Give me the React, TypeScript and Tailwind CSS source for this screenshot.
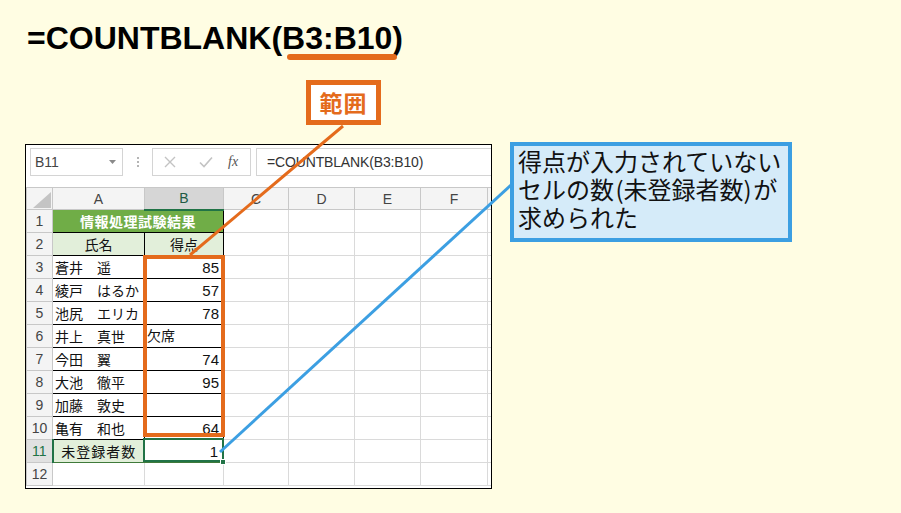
import React from "react";

const names: [string, string][] = [
  ["蒼井　遥", "85"],
  ["綾戸　はるか", "57"],
  ["池尻　エリカ", "78"],
  ["井上　真世", "欠席"],
  ["今田　翼", "74"],
  ["大池　徹平", "95"],
  ["加藤　敦史", ""],
  ["亀有　和也", "64"],
];

const cols = ["C", "D", "E", "F"];

function EmptyCells() {
  return (
    <>
      {cols.map((c) => (
        <td key={c} className="border border-[#dadada]" />
      ))}
      <td className="border-y border-[#dadada]" />
    </>
  );
}

function RowHead({ n, active }: { n: number; active?: boolean }) {
  return (
    <td
      className={
        active
          ? "border border-[#c8c8c8] border-r-2 border-r-[#217346] bg-[#e1e1e1] text-center text-[#217346] font-['Liberation_Sans',sans-serif] text-[14px] leading-none"
          : "border border-[#c8c8c8] bg-[#f4f4f4] text-center text-[#444] font-['Liberation_Sans',sans-serif] text-[14px] leading-none"
      }
    >
      {n}
    </td>
  );
}

export default function App() {
  return (
    <div className="relative w-[901px] h-[513px] overflow-hidden bg-[#fffde3] font-['Noto_Sans_CJK_JP',sans-serif]">
      <div className="flex flex-col">
        {/* heading */}
        <div className="pt-[20px] pl-[27px] font-['Liberation_Sans',sans-serif] font-bold text-[32px] leading-[36px] text-black whitespace-nowrap">
          =COUNTBLANK(
          <span className="relative">
            B3:B10
            <span className="absolute left-[5px] top-[34px] w-[110px] h-[6px] rounded-full bg-[#e46b1c]" />
          </span>
          )
        </div>

        {/* label */}
        <div className="mt-[24px] ml-[306px] w-[75px] h-[45px] border-[5px] border-[#e46b1c] bg-white flex items-center justify-center">
          <span className="text-[#e46b1c] font-bold text-[23px] leading-none tracking-[1px] font-['Noto_Sans_CJK_JP',sans-serif]">
            範囲
          </span>
        </div>

        <div className="flex items-start mt-[19px] ml-[25px]">
          {/* excel frame */}
          <div className="relative w-[467px] h-[345px] border border-black bg-white overflow-hidden flex flex-col">
            {/* toolbar */}
            <div className="h-[42px] flex items-start pt-[3px] pl-[4px] bg-white">
              <div className="w-[93px] h-[28px] border border-[#d4d4d4] bg-white flex items-center justify-between pl-[4px] pr-[6px]">
                <span className="font-['Liberation_Sans',sans-serif] text-[14px] text-[#444] leading-none">B11</span>
                <svg width="7" height="4" viewBox="0 0 7 4">
                  <path d="M0 0 L7 0 L3.5 4 Z" fill="#8a8a8a" />
                </svg>
              </div>
              <div className="w-[29px] h-[28px] flex flex-col items-center justify-center gap-[2px]">
                <span className="w-[2px] h-[2px] bg-[#b5b5b5]" />
                <span className="w-[2px] h-[2px] bg-[#b5b5b5]" />
                <span className="w-[2px] h-[2px] bg-[#b5b5b5]" />
              </div>
              <div className="w-[99px] h-[28px] border border-[#d4d4d4] bg-white flex items-center">
                <svg width="12" height="12" viewBox="0 0 12 12" className="ml-[11px]">
                  <path d="M1 1 L11 11 M11 1 L1 11" stroke="#c3c3c3" strokeWidth="1.4" fill="none" />
                </svg>
                <svg width="14" height="12" viewBox="0 0 14 12" className="ml-[23px]">
                  <path d="M1 6.5 L5 10.5 L13 1.5" stroke="#c3c3c3" strokeWidth="1.6" fill="none" />
                </svg>
                <span className="ml-[15px] font-['Liberation_Serif',serif] italic text-[14px] text-[#555] leading-none">
                  fx
                </span>
              </div>
              <div className="ml-[5px] flex-1 h-[28px] border border-r-0 border-[#d4d4d4] bg-white flex items-center pl-[10px]">
                <span className="font-['Liberation_Sans',sans-serif] text-[14px] text-[#333] leading-none tracking-[-0.15px]">
                  =COUNTBLANK(B3:B10)
                </span>
              </div>
            </div>

            {/* grid */}
            <table className="table-fixed border-collapse w-[465px] text-[14px] text-[#111]">
              <colgroup>
                <col className="w-[26px]" />
                <col className="w-[92px]" />
                <col className="w-[79px]" />
                <col className="w-[65px]" />
                <col className="w-[66px]" />
                <col className="w-[66px]" />
                <col className="w-[67px]" />
                <col className="w-[4px]" />
              </colgroup>
              <tbody>
                <tr className="h-[22px]">
                  <td className="border border-[#c8c8c8] bg-[#f4f4f4] p-0 relative">
                    <svg width="18" height="16" viewBox="0 0 18 16" className="absolute right-[1px] bottom-[1px]">
                      <path d="M18 0 L18 16 L0 16 Z" fill="#c4c4c4" />
                    </svg>
                  </td>
                  <td className="border border-[#c8c8c8] bg-[#f4f4f4] text-center text-[#444] font-['Liberation_Sans',sans-serif] leading-none">A</td>
                  <td className="border border-[#c8c8c8] border-b-2 border-b-[#217346] bg-[#d6d6d6] text-center text-[#215a43] font-['Liberation_Sans',sans-serif] leading-none">B</td>
                  {cols.map((c) => (
                    <td key={c} className="border border-[#c8c8c8] bg-[#f4f4f4] text-center text-[#444] font-['Liberation_Sans',sans-serif] leading-none">
                      {c}
                    </td>
                  ))}
                  <td className="border-y border-[#c8c8c8] bg-[#f4f4f4]" />
                </tr>

                <tr className="h-[23px]">
                  <RowHead n={1} />
                  <td colSpan={2} className="border border-black bg-[#70ad47] text-center text-white font-bold leading-none tracking-[0.5px]">
                    情報処理試験結果
                  </td>
                  <EmptyCells />
                </tr>

                <tr className="h-[23px]">
                  <RowHead n={2} />
                  <td className="border border-black bg-[#e2efda] text-center leading-none">氏名</td>
                  <td className="border border-black bg-[#e2efda] text-center leading-none">得点</td>
                  <EmptyCells />
                </tr>

                {names.map(([name, score], i) => {
                  const isText = score === "欠席";
                  return (
                    <tr key={name} className="h-[23px]">
                      <RowHead n={i + 3} />
                      <td className="border border-black pl-[2px] leading-none whitespace-nowrap">{name}</td>
                      <td
                        className={
                          isText
                            ? "border border-black pl-[2px] leading-none font-['Liberation_Sans','Noto_Sans_CJK_JP',sans-serif]"
                            : "border border-black pr-[4px] text-right leading-none font-['Liberation_Sans',sans-serif] text-[15px]"
                        }
                      >
                        {score}
                      </td>
                      <EmptyCells />
                    </tr>
                  );
                })}

                <tr className="h-[23px]">
                  <RowHead n={11} active />
                  <td className="border border-[#3f7a3a] bg-[#e2efda] text-center leading-none tracking-[1px]">未登録者数</td>
                  <td className="border border-[#3f7a3a] pr-[5px] text-right leading-none font-['Liberation_Sans',sans-serif] text-[15px]">
                    1
                  </td>
                  <EmptyCells />
                </tr>

                <tr className="h-[23px]">
                  <RowHead n={12} />
                  <td className="border border-[#dadada]" />
                  <td className="border border-[#dadada]" />
                  <EmptyCells />
                </tr>
              </tbody>
            </table>

            {/* orange range frame */}
            <div className="absolute left-[117px] top-[110px] w-[82px] h-[182px] border-[4px] border-[#e46b1c]" />
            {/* selection */}
            <div className="absolute left-[117px] top-[293px] w-[81px] h-[24px] border-2 border-[#217346]" />
            <div className="absolute left-[194px] top-[314px] w-[6px] h-[6px] bg-[#217346] border border-white" />
          </div>

          {/* callout */}
          <div className="ml-[18px] -mt-[2px] w-[282px] h-[100px] border-[4px] border-[#3c9fe2] bg-[#d5ebf9] pl-[4px] pt-[1px]">
            <p className="text-[24px] leading-[28px] text-[#111] whitespace-nowrap">
              得点が入力されていない
              <br />
              {"セルの数\u200A(未登録者数)\u200Aが"}
              <br />
              求められた
            </p>
          </div>
        </div>
      </div>

      {/* leader lines */}
      <svg className="absolute inset-0 pointer-events-none" width="901" height="513" viewBox="0 0 901 513">
        <line x1="343" y1="126" x2="190" y2="255" stroke="#e46b1c" strokeWidth="3" />
        <line x1="220" y1="452" x2="511" y2="185" stroke="#3c9fe2" strokeWidth="3" />
      </svg>
    </div>
  );
}
